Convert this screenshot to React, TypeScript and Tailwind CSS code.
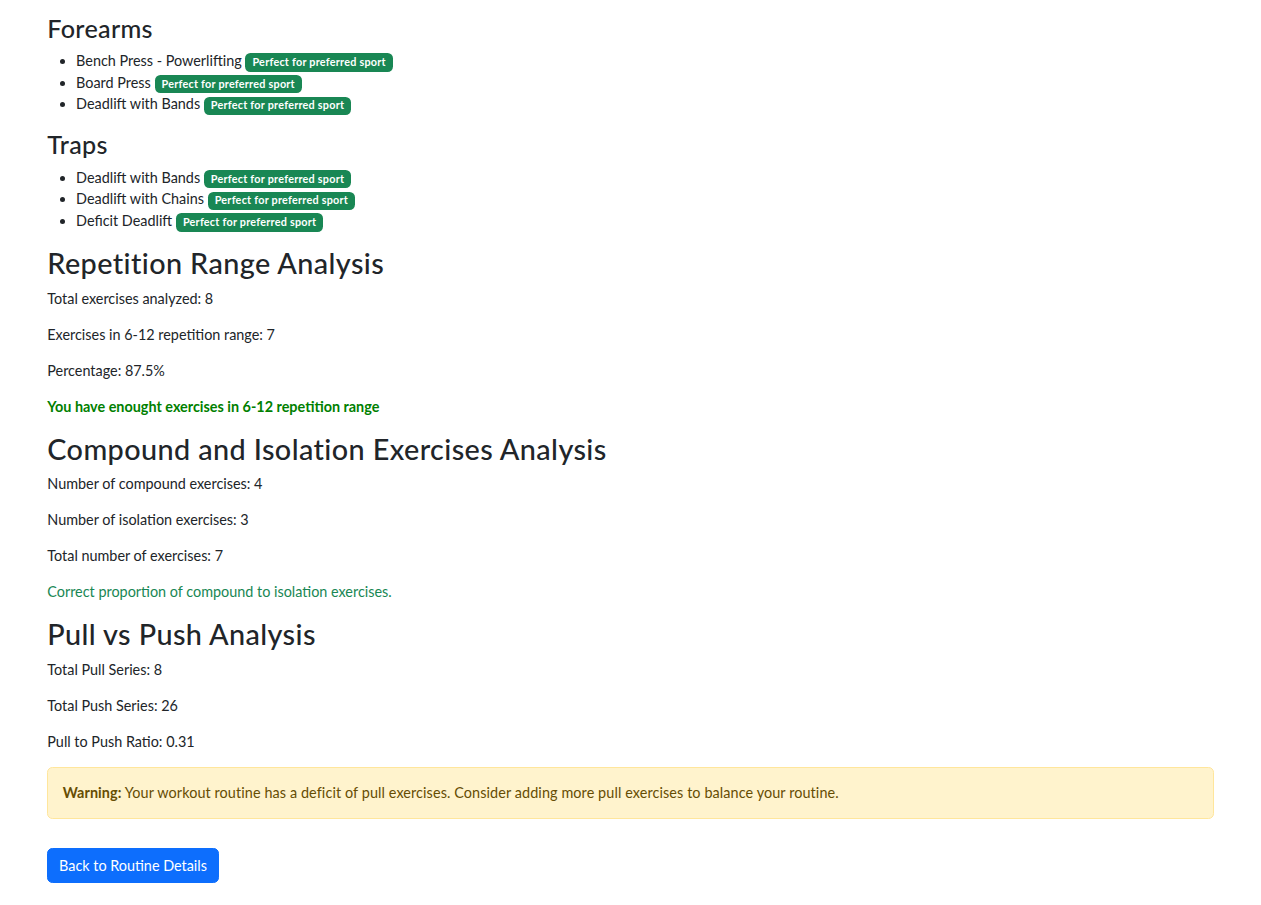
import React from "react";

const Badge = () => (
  <span className="inline-block rounded-[5.4px] bg-[#198754] px-[7px] py-[3.8px] align-baseline text-[10.8px] font-bold leading-none tracking-[0.25px] text-white">
    Perfect for preferred sport
  </span>
);

export default function App() {
  return (
    <div className="min-h-screen bg-white text-[14.4px] leading-[21.6px] text-[#212529]" style={{ fontFamily: "Lato, 'Noto Sans', sans-serif" }}>
      <div className="mx-auto w-[1188px] max-w-full px-[10.8px] pt-[12.8px]">
        <h3 className="mb-[7.2px] text-[25.2px] font-medium leading-[1.2] tracking-[0.3px]">Forearms</h3>
        <ul className="mb-[14.4px] list-disc pl-[28.8px]">
          <li>Bench Press - Powerlifting <Badge /></li>
          <li>Board Press <Badge /></li>
          <li>Deadlift with Bands <Badge /></li>
        </ul>
        <h3 className="mb-[7.2px] text-[25.2px] font-medium leading-[1.2] tracking-[0.3px]">Traps</h3>
        <ul className="mb-[14.4px] list-disc pl-[28.8px]">
          <li>Deadlift with Bands <Badge /></li>
          <li>Deadlift with Chains <Badge /></li>
          <li>Deficit Deadlift <Badge /></li>
        </ul>
        <h2 className="mb-[7.2px] text-[28.8px] font-medium leading-[1.2] tracking-[0.4px]">Repetition Range Analysis</h2>
        <p className="mb-[14.4px]">Total exercises analyzed: 8</p>
        <p className="mb-[14.4px]">Exercises in 6-12 repetition range: 7</p>
        <p className="mb-[14.4px]">Percentage: 87.5%</p>
        <p className="mb-[14.4px] font-bold text-[#008000]">You have enought exercises in 6-12 repetition range</p>
        <h2 className="mb-[7.2px] text-[28.8px] font-medium leading-[1.2] tracking-[0.4px]">Compound and Isolation Exercises Analysis</h2>
        <p className="mb-[14.4px]">Number of compound exercises: 4</p>
        <p className="mb-[14.4px]">Number of isolation exercises: 3</p>
        <p className="mb-[14.4px]">Total number of exercises: 7</p>
        <p className="mb-[14.4px] text-[#198754]">Correct proportion of compound to isolation exercises.</p>
        <h2 className="mb-[7.2px] text-[28.8px] font-medium leading-[1.2] tracking-[0.4px]">Pull vs Push Analysis</h2>
        <p className="mb-[14.4px]">Total Pull Series: 8</p>
        <p className="mb-[14.4px]">Total Push Series: 26</p>
        <p className="mb-[14.4px]">Pull to Push Ratio: 0.31</p>
        <div className="mb-[28.8px] rounded-[5.4px] border-[0.9px] border-[#ffe69c] bg-[#fff3cd] p-[14.4px] tracking-[0.1px] text-[#664d03]">
          <strong className="font-bold">Warning:</strong> Your workout routine has a deficit of pull exercises. Consider adding more pull exercises to balance your routine.
        </div>
        <div>
          <button className="inline-block rounded-[5.4px] border-[0.9px] border-[#0d6efd] bg-[#0d6efd] px-[10.8px] py-[5.4px] text-white">
            Back to Routine Details
          </button>
        </div>
      </div>
    </div>
  );
}
